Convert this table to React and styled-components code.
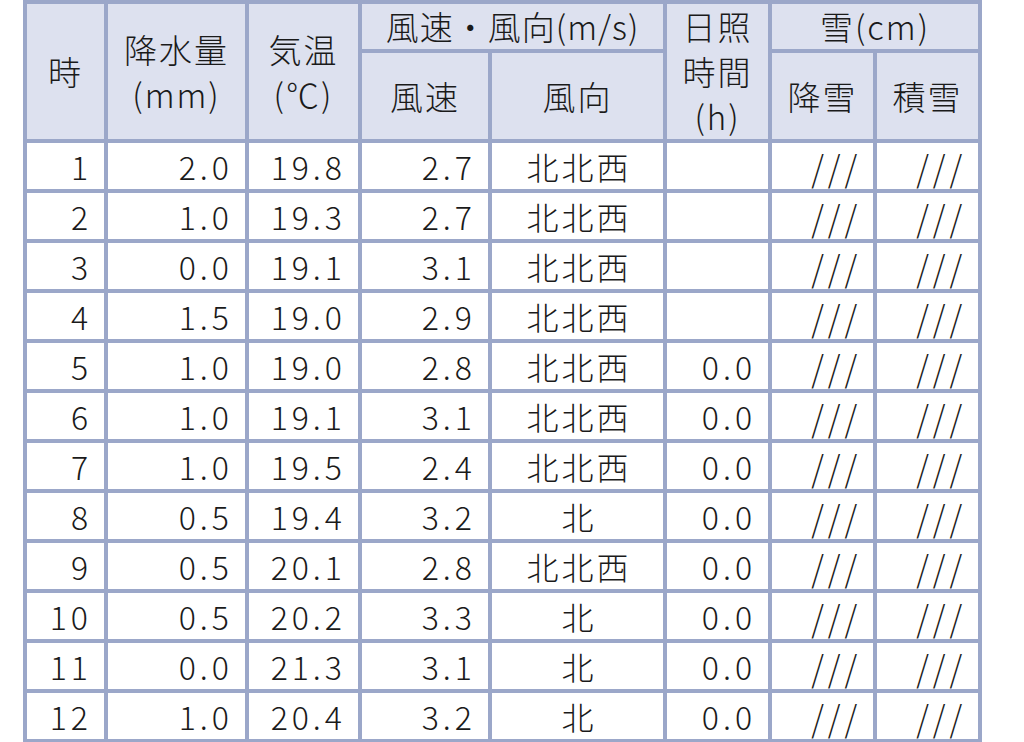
import React from 'react';
import styled, { createGlobalStyle } from 'styled-components';

const GlobalStyle = createGlobalStyle`
  body {
    margin: 0;
    background: #ffffff;
    font-family: "Noto Sans CJK JP", "Noto Sans", sans-serif;
    color: #1a1a1a;
  }
`;

const Page = styled.div`
  padding-left: 23px;
`;

const Table = styled.table`
  border-collapse: separate;
  border-spacing: 4px;
  background: #9ba7c9;
  table-layout: fixed;
  width: 959px;
`;

const HeadRow = styled.tr`
  height: ${(p) => p.$h}px;
`;

const Th = styled.th`
  background: #dde1ef;
  font-weight: 300;
  font-size: 33px;
  line-height: 45px;
  text-align: center;
  vertical-align: middle;
  padding: 0;
  white-space: pre-line;
  letter-spacing: ${(p) => (p.$tight ? 1 : 2)}px;
`;

const Row = styled.tr`
  height: 46px;
`;

const Td = styled.td`
  background: #ffffff;
  font-size: 32px;
  line-height: 46px;
  height: 46px;
  padding: 0 ${(p) => (p.$center ? 0 : 12)}px 0 ${(p) => (p.$center ? 3 : 0)}px;
  text-align: ${(p) => (p.$center ? 'center' : 'right')};
  letter-spacing: ${(p) => (p.$center ? 3 : 4)}px;
  vertical-align: middle;
  white-space: nowrap;
  font-weight: 300;
`;

const Slash = styled.span`
  display: inline-block;
  line-height: 32px;
  letter-spacing: 4px;
  transform: scaleY(1.12);
`;

const widths = [77, 137, 109, 126, 171, 101, 101, 101];

const rows = [
  [1, '2.0', '19.8', '2.7', '北北西', ''],
  [2, '1.0', '19.3', '2.7', '北北西', ''],
  [3, '0.0', '19.1', '3.1', '北北西', ''],
  [4, '1.5', '19.0', '2.9', '北北西', ''],
  [5, '1.0', '19.0', '2.8', '北北西', '0.0'],
  [6, '1.0', '19.1', '3.1', '北北西', '0.0'],
  [7, '1.0', '19.5', '2.4', '北北西', '0.0'],
  [8, '0.5', '19.4', '3.2', '北', '0.0'],
  [9, '0.5', '20.1', '2.8', '北北西', '0.0'],
  [10, '0.5', '20.2', '3.3', '北', '0.0'],
  [11, '0.0', '21.3', '3.1', '北', '0.0'],
  [12, '1.0', '20.4', '3.2', '北', '0.0'],
];

const App = () => {
  return (
    <Page>
      <GlobalStyle />
      <Table>
        <colgroup>
          {widths.map((w, i) => (
            <col key={i} style={{ width: w }} />
          ))}
        </colgroup>
        <thead>
          <HeadRow $h={45}>
            <Th rowSpan={2}>時</Th>
            <Th rowSpan={2}>{'降水量\n(mm)'}</Th>
            <Th rowSpan={2}>{'気温\n(℃)'}</Th>
            <Th colSpan={2} $tight>風速・風向(m/s)</Th>
            <Th rowSpan={2}>{'日照\n時間\n(h)'}</Th>
            <Th colSpan={2}>雪(cm)</Th>
          </HeadRow>
          <HeadRow $h={86}>
            <Th>風速</Th>
            <Th>風向</Th>
            <Th>降雪</Th>
            <Th>積雪</Th>
          </HeadRow>
        </thead>
        <tbody>
          {rows.map((r) => (
            <Row key={r[0]}>
              <Td>{r[0]}</Td>
              <Td>{r[1]}</Td>
              <Td>{r[2]}</Td>
              <Td>{r[3]}</Td>
              <Td $center>{r[4]}</Td>
              <Td>{r[5]}</Td>
              <Td><Slash>///</Slash></Td>
              <Td><Slash>///</Slash></Td>
            </Row>
          ))}
        </tbody>
      </Table>
    </Page>
  );
};

export default App;
